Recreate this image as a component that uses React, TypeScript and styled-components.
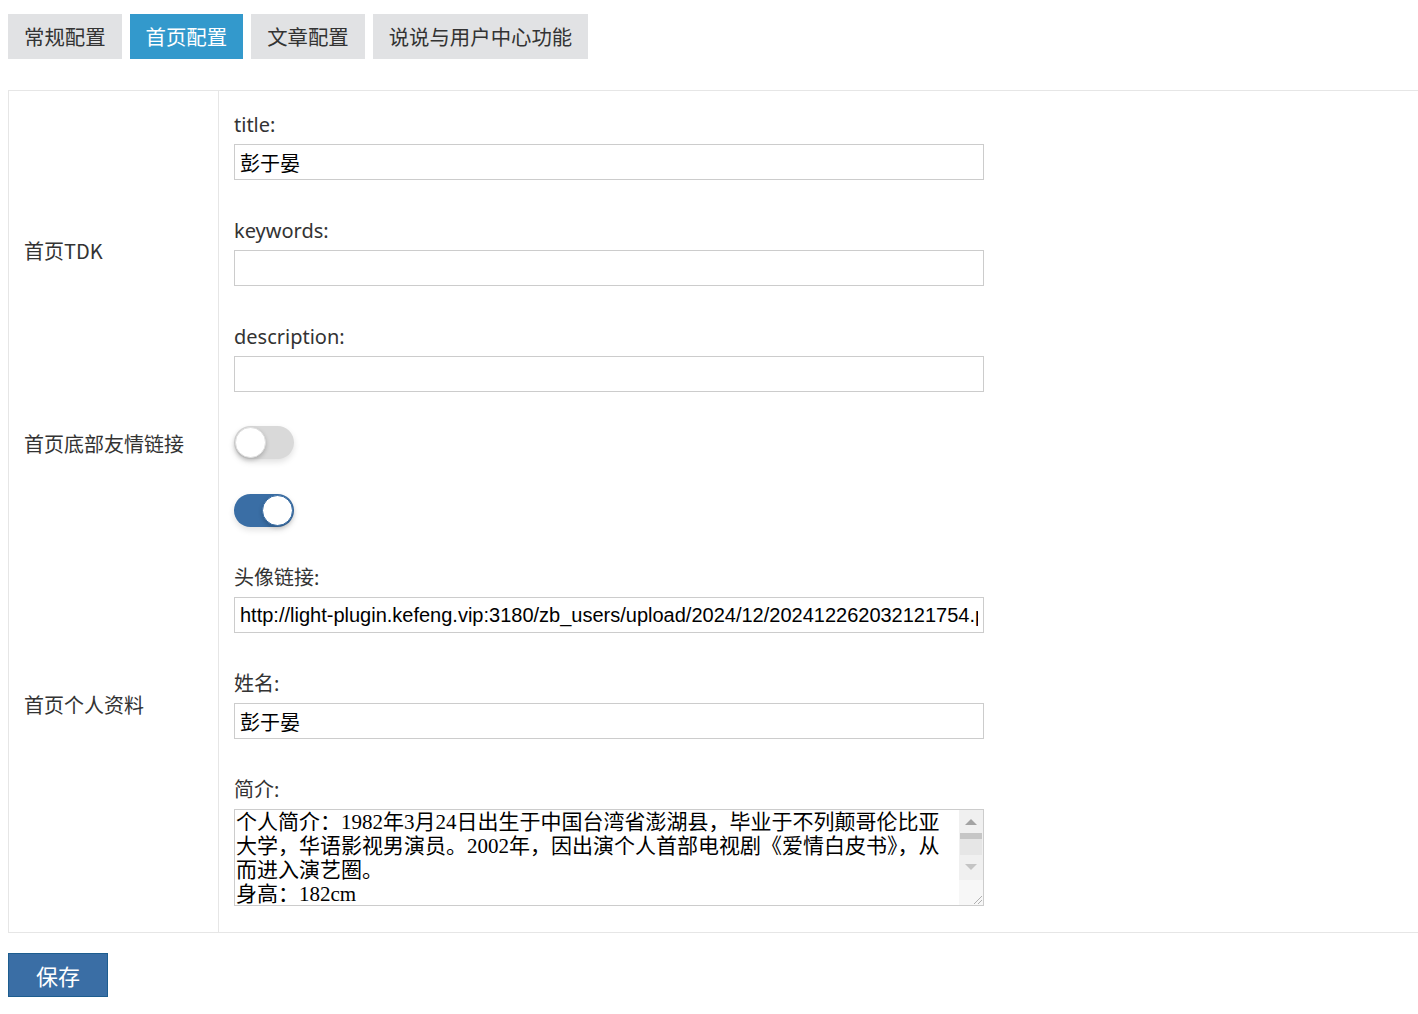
import React, { useState } from 'react'
import styled, { createGlobalStyle } from 'styled-components'

const GlobalStyle = createGlobalStyle`
  html, body {
    margin: 0;
    padding: 0;
    background: #fff;
    overflow-x: hidden;
  }
  body {
    font-family: "Noto Sans", "Noto Sans CJK SC", sans-serif;
    color: #333;
  }
`

const tabs = ['常规配置', '首页配置', '文章配置', '说说与用户中心功能']

const intro =
  '个人简介：1982年3月24日出生于中国台湾省澎湖县，毕业于不列颠哥伦比亚\n' +
  '大学，华语影视男演员。2002年，因出演个人首部电视剧《爱情白皮书》，从\n' +
  '而进入演艺圈。\n' +
  '身高：182cm\n\n\n\n\n'

const App: React.FC = () => {
  const [activeTab, setActiveTab] = useState(1)
  const [friendLinks, setFriendLinks] = useState(false)
  const [profile, setProfile] = useState(true)

  return (
    <Page>
      <GlobalStyle />
      <TabBar>
        {tabs.map((tab, i) => (
          <Tab key={tab} $active={i === activeTab} onClick={() => setActiveTab(i)}>
            {tab}
          </Tab>
        ))}
      </TabBar>

      <Table>
        <Row>
          <RowLabel>首页TDK</RowLabel>
          <RowBody $pad="21px 15px 18px">
            <Field>
              <FieldLabel>title:</FieldLabel>
              <TextInput defaultValue="彭于晏" />
            </Field>
            <Field>
              <FieldLabel>keywords:</FieldLabel>
              <TextInput defaultValue="" />
            </Field>
            <Field>
              <FieldLabel>description:</FieldLabel>
              <TextInput defaultValue="" />
            </Field>
          </RowBody>
        </Row>

        <Row>
          <RowLabel>首页底部友情链接</RowLabel>
          <RowBody $pad="16px 15px 17px">
            <Toggle $on={friendLinks} onClick={() => setFriendLinks(!friendLinks)}>
              <Knob $on={friendLinks} />
            </Toggle>
          </RowBody>
        </Row>

        <Row>
          <RowLabel>首页个人资料</RowLabel>
          <RowBody $pad="18px 15px 26px">
            <Field>
              <Toggle $on={profile} onClick={() => setProfile(!profile)}>
                <Knob $on={profile} />
              </Toggle>
            </Field>
            <Field>
              <FieldLabel>头像链接:</FieldLabel>
              <TextInput defaultValue="http://light-plugin.kefeng.vip:3180/zb_users/upload/2024/12/202412262032121754.png" />
            </Field>
            <Field>
              <FieldLabel>姓名:</FieldLabel>
              <TextInput defaultValue="彭于晏" />
            </Field>
            <Field>
              <FieldLabel>简介:</FieldLabel>
              <TextAreaWrap>
                <TextArea defaultValue={intro} />
                <ScrollRail>
                  <ScrollArrow $dir="up" />
                  <ScrollThumb />
                  <ScrollArrow $dir="down" />
                  <ResizeCorner>
                    <svg width="12" height="12" viewBox="0 0 12 12">
                      <path d="M11 3 L3 11 M11 7 L7 11" stroke="#b0b0b0" strokeWidth="1" fill="none" />
                    </svg>
                  </ResizeCorner>
                </ScrollRail>
              </TextAreaWrap>
            </Field>
          </RowBody>
        </Row>
      </Table>

      <SaveButton>保存</SaveButton>
    </Page>
  )
}

const Page = styled.div`
  padding: 14px 0 20px 8px;
`

const TabBar = styled.div`
  display: flex;
  gap: 8px;
`

const Tab = styled.div<{ $active: boolean }>`
  height: 45px;
  line-height: 45px;
  padding: 0 16px;
  font-size: 20.4px;
  font-family: "Noto Sans CJK SC", sans-serif;
  background: ${(p) => (p.$active ? '#3399cc' : '#e1e2e4')};
  color: ${(p) => (p.$active ? '#fff' : '#333')};
  cursor: pointer;
`

const Table = styled.div`
  margin-top: 31px;
  margin-right: -2px;
  border: 1px solid #e6e6e6;
`

const Row = styled.div`
  display: grid;
  grid-template-columns: 210px 1fr;
`

const RowLabel = styled.div`
  display: flex;
  align-items: center;
  padding: 0 15px;
  border-right: 1px solid #e6e6e6;
  font-size: 20px;
  font-family: "Noto Sans CJK SC", sans-serif;
  color: #333;
`

const RowBody = styled.div<{ $pad: string }>`
  display: flex;
  flex-direction: column;
  align-items: flex-start;
  gap: 38px;
  padding: ${(p) => p.$pad};
`

const Field = styled.div`
  display: flex;
  flex-direction: column;
  gap: 6px;
`

const FieldLabel = styled.label`
  height: 26px;
  line-height: 26px;
  font-size: 20px;
  color: #333;
`

const TextInput = styled.input`
  box-sizing: border-box;
  width: 750px;
  height: 36px;
  padding: 0 5px;
  border: 1px solid #ccc;
  font-family: "Liberation Sans", "Noto Sans CJK SC", sans-serif;
  font-size: 20px;
  color: #000;
  outline: none;
`

const TextAreaWrap = styled.div`
  position: relative;
  width: 750px;
  height: 97px;
`

const TextArea = styled.textarea`
  display: block;
  box-sizing: border-box;
  width: 100%;
  height: 100%;
  margin: 0;
  padding: 0 25px 0 1px;
  border: 1px solid #ccc;
  font-family: "Liberation Serif", "Noto Sans CJK SC", serif;
  font-size: 21px;
  line-height: 24px;
  color: #000;
  outline: none;
  resize: none;
  overflow: hidden;
  white-space: pre;
`

const ScrollRail = styled.div`
  position: absolute;
  top: 1px;
  right: 1px;
  bottom: 1px;
  width: 24px;
  display: flex;
  flex-direction: column;
  background: #f0f0f0;
`

const ScrollArrow = styled.div<{ $dir: 'up' | 'down' }>`
  height: 23px;
  display: flex;
  align-items: center;
  justify-content: center;

  &::before {
    content: '';
    width: 0;
    height: 0;
    border-left: 6px solid transparent;
    border-right: 6px solid transparent;
    ${(p) =>
      p.$dir === 'up'
        ? 'border-bottom: 6px solid #a3a3a3;'
        : 'border-top: 6px solid #c4c4c4;'}
  }
`

const ScrollThumb = styled.div`
  height: 22px;
  margin: 0 1px;
  background: #e6e6e6;
  border-top: 6px solid #c6c6c6;
  box-sizing: border-box;
`

const ResizeCorner = styled.div`
  flex: 1;
  margin-top: 2px;
  background: #f7f7f7;
  display: flex;
  align-items: flex-end;
  justify-content: flex-end;
`

const Toggle = styled.div<{ $on: boolean }>`
  position: relative;
  width: 60px;
  height: 33px;
  border-radius: 17px;
  background: ${(p) => (p.$on ? '#3a6ea5' : '#d9d9d9')};
  box-shadow: 0 3px 6px rgba(0, 0, 0, 0.12);
  cursor: pointer;
`

const Knob = styled.span<{ $on: boolean }>`
  position: absolute;
  top: 1px;
  left: ${(p) => (p.$on ? '28px' : '1px')};
  width: 31px;
  height: 31px;
  box-sizing: border-box;
  border-radius: 50%;
  background: #fff;
  border: 1px solid ${(p) => (p.$on ? '#3a6ea5' : '#e0e0e0')};
  box-shadow: 0 2px 4px rgba(0, 0, 0, 0.2);
`

const SaveButton = styled.button`
  display: block;
  margin-top: 20px;
  width: 100px;
  height: 44px;
  background: #3a6ea5;
  border: 1px solid #1d5d8f;
  color: #fff;
  font-size: 22px;
  font-family: "Noto Sans CJK SC", sans-serif;
  cursor: pointer;
`

export default App
